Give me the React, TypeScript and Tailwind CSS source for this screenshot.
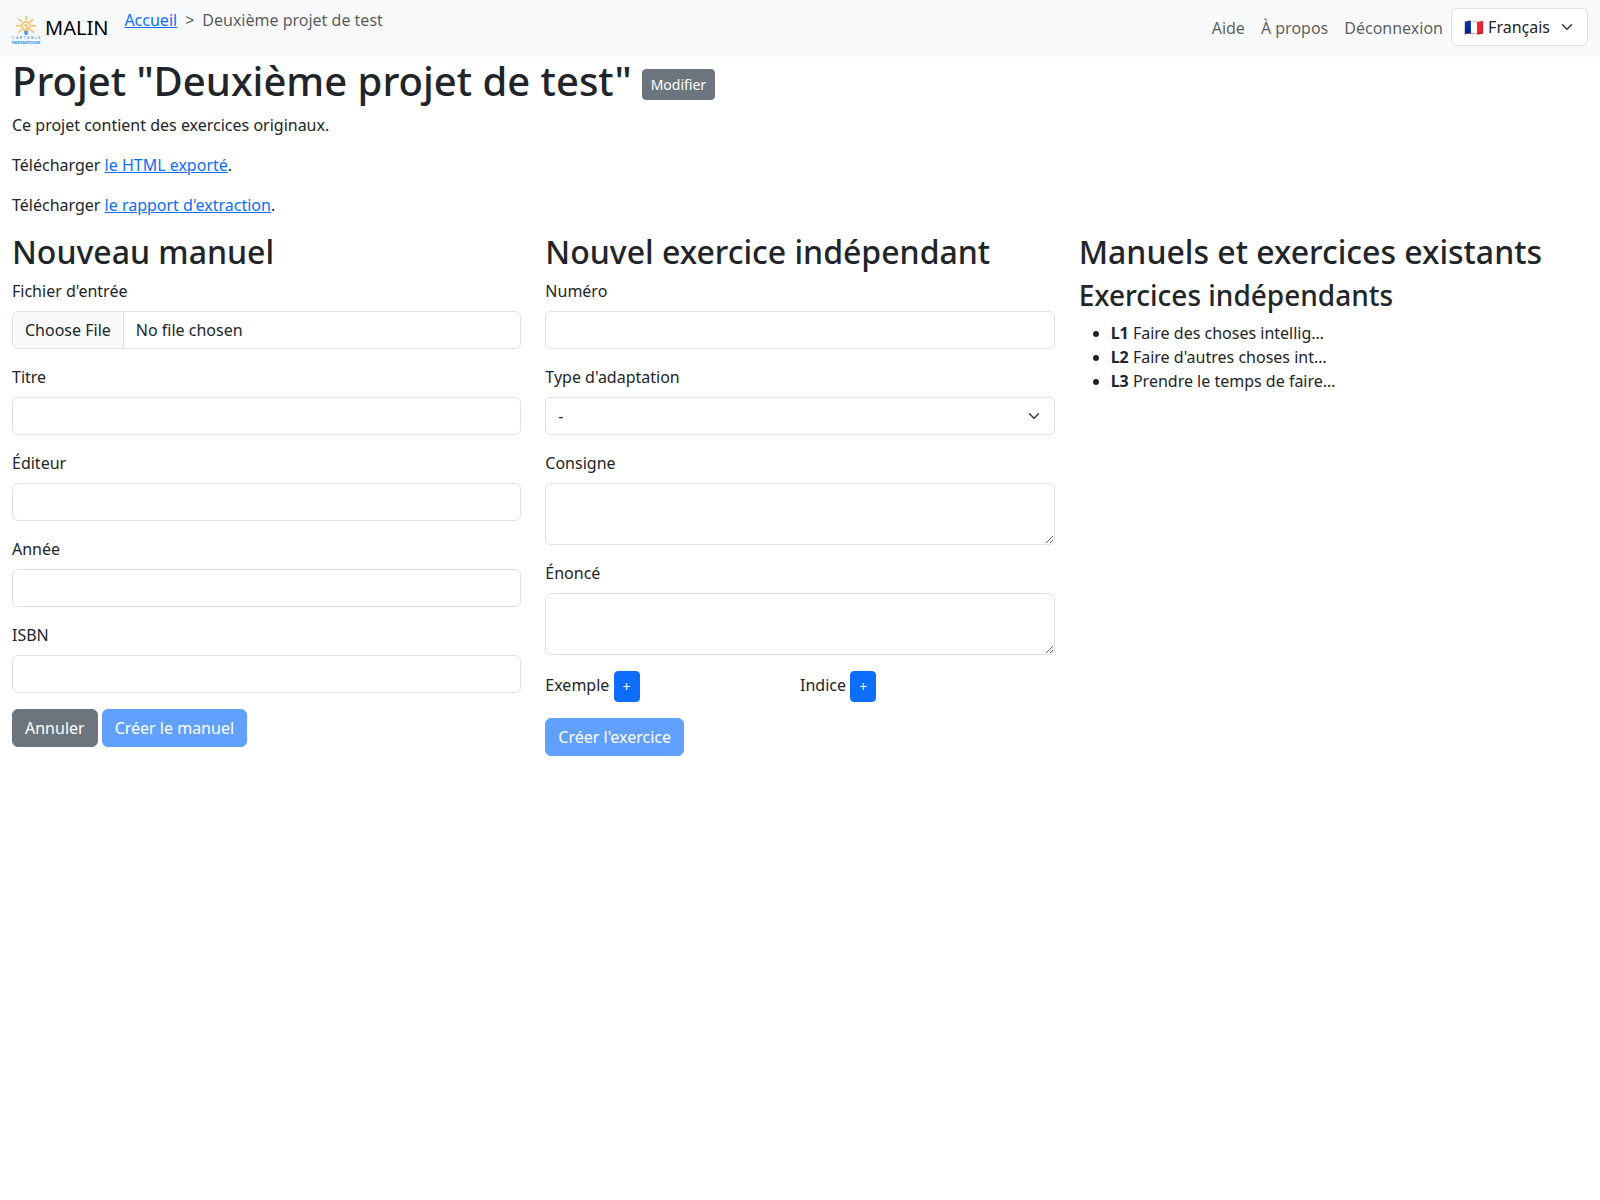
import React from "react";

const control =
  "block w-full rounded-md border border-[#dee2e6] bg-white text-base leading-6 text-[#212529]";

const button = "inline-block rounded-md border px-3 py-1.5 text-base leading-6 text-white";
const smallButton = "inline-block rounded border px-2 py-1 text-sm leading-[21px] text-white align-middle";

function Logo() {
  return (
    <svg width="29" height="30" viewBox="0 0 29 30" className="shrink-0">
      <g stroke="#fab95f" strokeWidth="1.4" strokeLinecap="round" fill="none">
        <path d="M14 2.4v3.2M4.4 11.7h4M19.8 11.7h4M7 5.3l2.6 2.4M21 5.3l-2.6 2.4M6.6 18.2l2.8-2.3M21.4 18.2l-2.8-2.3" />
        <path d="M12.3 16.6c0-1.6-2.5-2.3-2.5-4.7a4.2 4.2 0 0 1 8.4 0c0 2.4-2.5 3.1-2.5 4.7z" />
        <path d="M12.6 11.6c1.2-1.4 2.9-.6 2.8.5-.1 1.2-1.3 1.4-1.4 3.4" />
      </g>
      <path d="M12.3 17h3.6v2.6l-1 1.4h-1.6l-1-1.4z" fill="#3f9cf8" />
      <g fill="#4a9ff8" fontFamily="Liberation Sans, sans-serif" fontWeight="700">
        <text x="0" y="25.4" textLength="28.4" lengthAdjust="spacing" fontSize="3.1">CARTABLE</text>
        <text x="0" y="29.7" textLength="28.2" lengthAdjust="spacingAndGlyphs" fontSize="4" stroke="#4a9ff8" strokeWidth="0.2">FANTASTIQUE</text>
      </g>
    </svg>
  );
}

function Chevron({ className }: { className: string }) {
  return (
    <svg viewBox="0 0 16 16" className={className}>
      <path fill="none" stroke="#343a40" strokeLinecap="round" strokeLinejoin="round" strokeWidth="2" d="m2 5 6 6 6-6" />
    </svg>
  );
}

function Select({ children }: { children: React.ReactNode }) {
  return (
    <div className="relative">
      <select className={`${control} appearance-none py-1.5 pr-9 pl-3`}>{children}</select>
      <Chevron className="pointer-events-none absolute top-[13px] right-[13px] h-3 w-4" />
    </div>
  );
}

function Field({ label, children }: { label: string; children?: React.ReactNode }) {
  return (
    <div className="mb-4">
      <label className="mb-2 block">{label}</label>
      {children ?? <input type="text" className={`${control} px-3 py-1.5`} />}
    </div>
  );
}

function TextArea() {
  return <textarea rows={2} className={`${control} h-[62px] resize-y px-3 py-1.5`} />;
}

function Navbar() {
  return (
    <nav className="flex h-[57px] items-start bg-[#f8f9fa] px-3 pt-2">
      <a className="mr-4 flex items-center pt-[3px] text-xl leading-[30px] text-black">
        <span className="mr-1 pt-[3px]"><Logo /></span>
        MALIN
      </a>
      <ol className="flex">
        <li><a href="#" className="text-[#0d6efd] underline">Accueil</a></li>
        <li className="px-2 text-[rgba(33,37,41,0.75)]">&gt;</li>
        <li className="text-[rgba(33,37,41,0.75)]">Deuxième projet de test</li>
      </ol>
      <div className="ml-auto flex">
        {["Aide", "À propos", "Déconnexion"].map((item) => (
          <a key={item} className="px-2 py-2 text-[rgba(0,0,0,0.65)]">{item}</a>
        ))}
        <div className="w-[137px]">
          <Select>
            <option>🇫🇷 Français</option>
          </Select>
        </div>
      </div>
    </nav>
  );
}

export default function App() {
  return (
    <div className="min-h-[1200px] bg-white font-['Noto_Sans','Noto_Color_Emoji',sans-serif] text-base leading-6 text-[#212529]">
      <Navbar />
      <main className="px-3">
        <h1 className="mb-2 h-12 text-[40px] leading-[48px] font-medium">
          Projet "Deuxième projet de test"{" "}
          <button className={`${smallButton} -ml-[0.4px] mb-[2px] border-[#6c757d] bg-[#6c757d] font-normal`}>Modifier</button>
        </h1>
        <p className="mb-4">Ce projet contient des exercices originaux.</p>
        <p className="mb-4">Télécharger <a href="#" className="text-[#0d6efd] underline">le HTML exporté</a>.</p>
        <p className="mb-4">Télécharger <a href="#" className="text-[#0d6efd] underline">le rapport d'extraction</a>.</p>
        <div className="grid grid-cols-3 gap-6">
          <section>
            <h2 className="mb-2 text-[32px] leading-[1.2] font-medium">Nouveau manuel</h2>
            <Field label="Fichier d'entrée">
              <input
                type="file"
                className={`${control} h-[38px] overflow-hidden pr-3 file:me-3 file:h-9 file:border-0 file:border-r file:border-solid file:border-[#dee2e6] file:bg-[#f8f9fa] file:px-3 file:text-[#212529]`}
              />
            </Field>
            <Field label="Titre" />
            <Field label="Éditeur" />
            <Field label="Année" />
            <Field label="ISBN" />
            <div className="flex gap-1">
              <button className={`${button} border-[#6c757d] bg-[#6c757d]`}>Annuler</button>
              <button disabled className={`${button} border-[#0d6efd] bg-[#0d6efd] opacity-65`}>Créer le manuel</button>
            </div>
          </section>
          <section>
            <h2 className="mb-2 text-[32px] leading-[1.2] font-medium">Nouvel exercice indépendant</h2>
            <Field label="Numéro" />
            <Field label="Type d'adaptation">
              <Select><option>-</option></Select>
            </Field>
            <Field label="Consigne"><TextArea /></Field>
            <Field label="Énoncé"><TextArea /></Field>
            <div className="mb-4 grid grid-cols-2">
              {["Exemple", "Indice"].map((name) => (
                <div key={name} className="h-[31px]">
                  {name} <button className={`${smallButton} border-[#0d6efd] bg-[#0d6efd]`}>+</button>
                </div>
              ))}
            </div>
            <button disabled className={`${button} border-[#0d6efd] bg-[#0d6efd] opacity-65`}>Créer l'exercice</button>
          </section>
          <section>
            <h2 className="mb-2 text-[32px] leading-[1.2] font-medium">Manuels et exercices existants</h2>
            <h3 className="mb-2 text-[28px] leading-[1.2] font-medium">Exercices indépendants</h3>
            <ul className="list-disc pl-8">
              <li><b>L1</b> Faire des choses intellig…</li>
              <li><b>L2</b> Faire d'autres choses int…</li>
              <li><b>L3</b> Prendre le temps de faire…</li>
            </ul>
          </section>
        </div>
      </main>
    </div>
  );
}
